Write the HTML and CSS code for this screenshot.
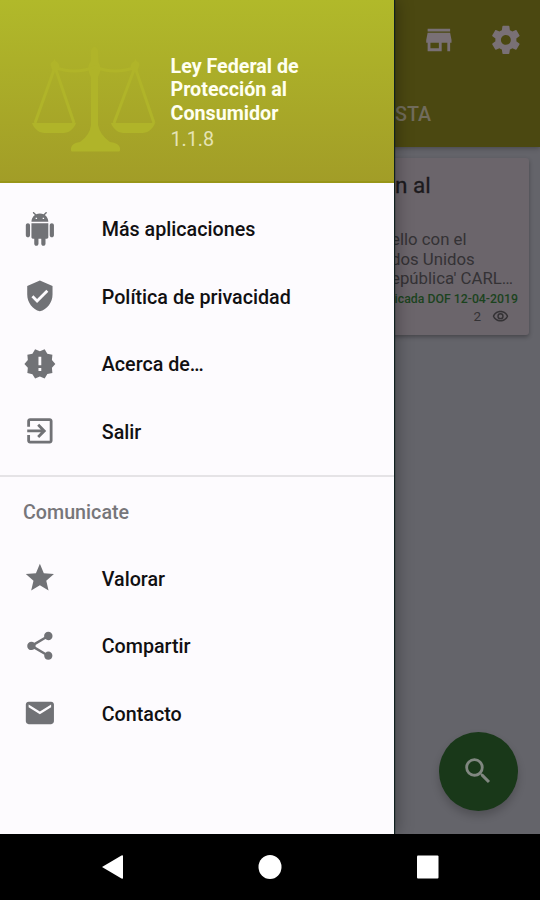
FILE: index.html
```
<!DOCTYPE html>
<html lang="es">
<head>
<meta charset="utf-8">
<title>Ley Federal de Protección al Consumidor</title>
<link rel="stylesheet" href="styles.css">
</head>
<body>
<div class="phone">
  <main class="screen">
    <header class="appbar">
      <div class="actions">
        <svg class="icon" viewBox="0 0 24 24"><path d="M20 4H4v2h16V4zm1 10v-2l-1-5H4l-1 5v2h1v6h10v-6h4v6h2v-6h1zm-9 4H6v-4h6v4z"/></svg>
        <svg class="icon" viewBox="0 0 24 24"><path d="M19.430 12.980c.04-.32.07-.64.07-.98s-.03-.66-.07-.98l2.110-1.650c.19-.15.24-.42.12-.64l-2-3.460c-.12-.22-.39-.3-.61-.22l-2.490 1c-.52-.4-1.080-.73-1.690-.98l-.38-2.650C14.460 2.180 14.250 2 14 2h-4c-.25 0-.46.18-.49.42l-.38 2.650c-.61.25-1.170.59-1.690.98l-2.490-1c-.23-.09-.49 0-.61.22l-2 3.460c-.13.22-.07.49.12.64l2.110 1.650c-.04.32-.07.65-.07.98s.03.66.07.98l-2.110 1.650c-.19.15-.24.42-.12.64l2 3.460c.12.22.39.3.61.22l2.490-1c.52.4 1.080.73 1.690.98l.38 2.650c.03.24.24.42.49.42h4c.25 0 .46-.18.49-.42l.38-2.650c.61-.25 1.170-.59 1.690-.98l2.490 1c.23.09.49 0 .61-.22l2-3.460c.12-.22.07-.49-.12-.64l-2.110-1.650zM12 15.500c-1.930 0-3.500-1.570-3.500-3.500s1.570-3.500 3.500-3.500 3.500 1.570 3.500 3.500-1.570 3.500-3.500 3.500z"/></svg>
      </div>
      <div class="tab">STA</div>
    </header>
    <article class="card">
      <h2 class="card-title">n al</h2>
      <p class="card-text">ello con el<br>dos Unidos<br>epública' CARL…</p>
      <p class="card-date">icada DOF 12-04-2019</p>
      <div class="card-views"><span>2</span>
        <svg viewBox="0 0 24 24"><path d="M12 6c3.800 0 7.200 2.100 8.800 5.500-1.600 3.400-5 5.500-8.800 5.500s-7.200-2.100-8.800-5.500C4.800 8.100 8.200 6 12 6m0-2C7 4 2.700 7.100 1 11.500 2.700 15.900 7 19 12 19s9.300-3.100 11-7.500C21.300 7.100 17 4 12 4zm0 5a2.500 2.500 0 1 1 0 5 2.500 2.500 0 0 1 0-5m0-2a4.500 4.500 0 1 0 0 9 4.500 4.500 0 0 0 0-9z"/></svg>
      </div>
    </article>
    <div class="fab">
      <svg viewBox="0 0 24 24"><path d="M15.500 14h-.79l-.28-.27A6.471 6.471 0 0 0 16 9.500 6.500 6.500 0 1 0 9.500 16c1.610 0 3.090-.59 4.230-1.570l.27.28v.79l5 4.990L20.490 19l-4.990-5zm-6 0C7.010 14 5 11.990 5 9.500S7.010 5 9.500 5 14 7.010 14 9.500 11.990 14 9.500 14z"/></svg>
    </div>
    <aside class="drawer">
      <div class="drawer-head">
        <svg class="scales" viewBox="0 0 126 108">
          <path d="M59 4q3.500-7 7 0l.5 12q3 5 1.500 10-1 3-2 5v48q2 10 12 17 9 1 10 6v2.500q0 1-1 1H40q-1 0-1-1V102q1-5 9-6 10-7 11-17V31q-4-6-2-13 2-2 2-4z"/>
          <path class="line" d="M22 21q20 8 41 0 20 8 41 0M23 21 3 77M23 21 42 77M103 21 82 77M103 21 122 77"/>
          <path d="M18.500 19q0-3 3-4 1-4 2 0 4 2 4 6-3 4-7 4zM107.500 19q0-3-3-4-1-4-2 0-4 2-4 6 3 4 7 4z"/>
          <path d="M0 77h44q-1 4-6 8-3 2-9 2H15q-6 0-9-2-5-4-6-8zM79 77h44q-1 4-6 8-3 2-9 2H94q-6 0-9-2-5-4-6-8z"/>
        </svg>
        <div class="titles">
          <div class="app-name">Ley Federal de<br>Protección al<br>Consumidor</div>
          <div class="version">1.1.8</div>
        </div>
      </div>
      <nav class="menu">
        <div class="row"><svg class="icon" viewBox="0 0 24 24"><path d="M6 18c0 .55.45 1 1 1h1v3.500c0 .83.67 1.500 1.500 1.500s1.500-.67 1.500-1.500V19h2v3.500c0 .83.67 1.500 1.500 1.500s1.500-.67 1.500-1.500V19h1c.55 0 1-.45 1-1V8H6v10zM3.500 8C2.670 8 2 8.670 2 9.500v7c0 .83.67 1.500 1.500 1.500S5 17.330 5 16.500v-7C5 8.670 4.330 8 3.500 8zm17 0c-.83 0-1.500.67-1.500 1.500v7c0 .83.67 1.500 1.500 1.500s1.500-.67 1.500-1.500v-7c0-.83-.67-1.500-1.500-1.500zm-4.970-5.840l1.300-1.300c.2-.2.2-.51 0-.71-.2-.2-.51-.2-.71 0l-1.480 1.480C13.850 1.230 12.950 1 12 1c-.96 0-1.860.23-2.660.63L7.850.15c-.2-.2-.51-.2-.71 0-.2.2-.2.51 0 .71l1.310 1.310C6.970 3.260 6 5.010 6 7h12c0-1.990-.97-3.750-2.470-4.840zM10 5H9V4h1v1zm5 0h-1V4h1v1z"/></svg><span>Más aplicaciones</span></div>
        <div class="row"><svg class="icon" viewBox="0 0 24 24"><path d="M12 1L3 5v6c0 5.550 3.840 10.740 9 12 5.160-1.260 9-6.450 9-12V5l-9-4zm-2 16l-4-4 1.410-1.410L10 14.170l6.590-6.590L18 9l-8 8z"/></svg><span>Política de privacidad</span></div>
        <div class="row"><svg class="icon" viewBox="0 0 24 24"><path d="M23 12l-2.440-2.780.34-3.680-3.610-.82-1.890-3.180L12 3 8.600 1.540 6.710 4.720l-3.610.81.34 3.680L1 12l2.440 2.780-.34 3.690 3.610.82 1.890 3.180L12 21l3.400 1.460 1.890-3.180 3.610-.82-.34-3.680L23 12zm-10 5h-2v-2h2v2zm0-4h-2V7h2v6z"/></svg><span>Acerca de…</span></div>
        <div class="row"><svg class="icon" viewBox="0 0 24 24"><path d="M10.090 15.590L11.500 17l5-5-5-5-1.410 1.410L12.670 11H3v2h9.670l-2.580 2.590zM19 3H5c-1.110 0-2 .9-2 2v4h2V5h14v14H5v-4H3v4c0 1.100.89 2 2 2h14c1.100 0 2-.9 2-2V5c0-1.100-.9-2-2-2z"/></svg><span>Salir</span></div>
      </nav>
      <nav class="menu second">
        <div class="subhead">Comunicate</div>
        <div class="row"><svg class="icon" viewBox="0 0 24 24"><path d="M12 17.270L18.180 21l-1.640-7.030L22 9.240l-7.190-.61L12 2 9.190 8.630 2 9.240l5.460 4.730L5.820 21z"/></svg><span>Valorar</span></div>
        <div class="row"><svg class="icon" viewBox="0 0 24 24"><path d="M18 16.080c-.76 0-1.440.3-1.960.77L8.910 12.700c.05-.23.09-.46.09-.7s-.04-.47-.09-.7l7.050-4.110c.54.5 1.250.81 2.040.81 1.660 0 3-1.340 3-3s-1.340-3-3-3-3 1.340-3 3c0 .24.04.47.09.7L8.040 9.810C7.500 9.310 6.790 9 6 9c-1.660 0-3 1.340-3 3s1.340 3 3 3c.79 0 1.500-.31 2.040-.81l7.120 4.160c-.05.21-.08.43-.08.65 0 1.610 1.310 2.920 2.920 2.920s2.920-1.310 2.920-2.920-1.310-2.920-2.920-2.920z"/></svg><span>Compartir</span></div>
        <div class="row"><svg class="icon" viewBox="0 0 24 24"><path d="M20 4H4c-1.100 0-1.990.9-1.990 2L2 18c0 1.100.9 2 2 2h16c1.100 0 2-.9 2-2V6c0-1.100-.9-2-2-2zm0 4l-8 5-8-5V6l8 5 8-5v2z"/></svg><span>Contacto</span></div>
      </nav>
    </aside>
  </main>
  <footer class="navbar">
    <svg viewBox="0 0 24 26"><path d="M2 13 21.500 1.500q1.500-.5 1.500 .5v22q0 1-1.500 .5z"/></svg>
    <svg viewBox="0 0 24 26"><ellipse cx="12" cy="13" rx="11.500" ry="12"/></svg>
    <svg viewBox="0 0 24 26"><rect x="1" y="1.500" width="21.500" height="23" rx="1"/></svg>
  </footer>
</div>
</body>
</html>
```
FILE: styles.css
```
* { box-sizing: border-box; margin: 0; padding: 0; }
body { font-family: Roboto, "Liberation Sans", sans-serif; background: #000; }
svg { display: block; fill: currentColor; }
.phone { width: 540px; height: 900px; display: flex; flex-direction: column; overflow: hidden; }
.screen { position: relative; flex: 1; background: #64646a; overflow: hidden; }
.icon { width: 33.750px; height: 33.750px; flex: none; }

.appbar { height: 147px; background: #4b4811; color: #797075; padding: 23px 17px 0 394px; box-shadow: 0 1px 5px rgba(0,0,0,.3); }
.actions { display: flex; justify-content: flex-end; gap: 33.500px; }
.tab { margin-top: 46px; padding-left: 1px; font-size: 19.700px; line-height: 24px; font-weight: 500; color: #716c5c; }

.card { margin: 11px 11px 0; height: 177px; padding: 13px 11px 0 380px; background: #6b656b; border-radius: 3px; box-shadow: 0 2px 4px rgba(0,0,0,.3); white-space: nowrap; }
.card-title { font-size: 22.500px; line-height: 28px; font-weight: 400; -webkit-text-stroke: .3px #1c1a1d; color: #1c1a1d; padding-left: 4px; }
.card-text { margin-top: 31px; font-size: 16.800px; line-height: 19.500px; color: #343235; }
.card-date { margin-top: 2px; font-size: 12.300px; line-height: 17px; font-weight: 500; color: #1b431e; display: flex; justify-content: flex-end; }
.card-views { display: flex; justify-content: flex-end; align-items: center; gap: 11px; padding-right: 9px; font-size: 13.500px; line-height: 16px; color: #343235; }
.card-views svg { width: 17px; height: 17px; }

.fab { position: absolute; right: 22px; bottom: 23px; width: 79px; height: 79px; border-radius: 50%; background: #193819; color: #808780; display: grid; place-items: center; box-shadow: 0 5px 8px rgba(0,0,0,.2); }
.fab svg { width: 34px; height: 34px; margin: -2px 0 0 -2px; }

.drawer { position: absolute; left: 0; top: 0; bottom: 0; width: 394px; background: #fdfbfe; box-shadow: 1px 0 1px #102020, 2px 0 16px rgba(0,0,0,.35); }
.drawer-head { height: 183px; display: flex; background: linear-gradient(#b1b92a, #a29d27); border-bottom: 2px solid #989619; }
.scales { width: 126px; height: 108px; margin: 46px 0 0 32px; fill: #b0b429; }
.scales .line { fill: none; stroke: #b0b429; stroke-width: 3; }
.titles { margin: 55px 0 0 12.500px; }
.app-name { font-size: 19.700px; line-height: 23.400px; font-weight: 700; color: #fffff0; }
.version { font-size: 19.700px; line-height: 25px; margin-top: 2px; color: #e5e3b5; }
.menu { padding-top: 12px; color: #717276; }
.row { height: 67.500px; display: flex; align-items: center; gap: 45px; padding-left: 23px; font-size: 19.700px; font-weight: 500; }
.row span { color: #111012; padding-top: 2px; }
.second { margin-top: 10px; padding-top: 0; border-top: 2px solid #e5e3e6; }
.subhead { height: 67.500px; line-height: 71px; padding-left: 23px; font-size: 19.700px; font-weight: 500; color: #77767a; }

.navbar { height: 66px; background: #000; color: #fff; display: flex; justify-content: center; gap: 134px; padding-top: 20px; }
.navbar svg { width: 24px; height: 26px; }
```
